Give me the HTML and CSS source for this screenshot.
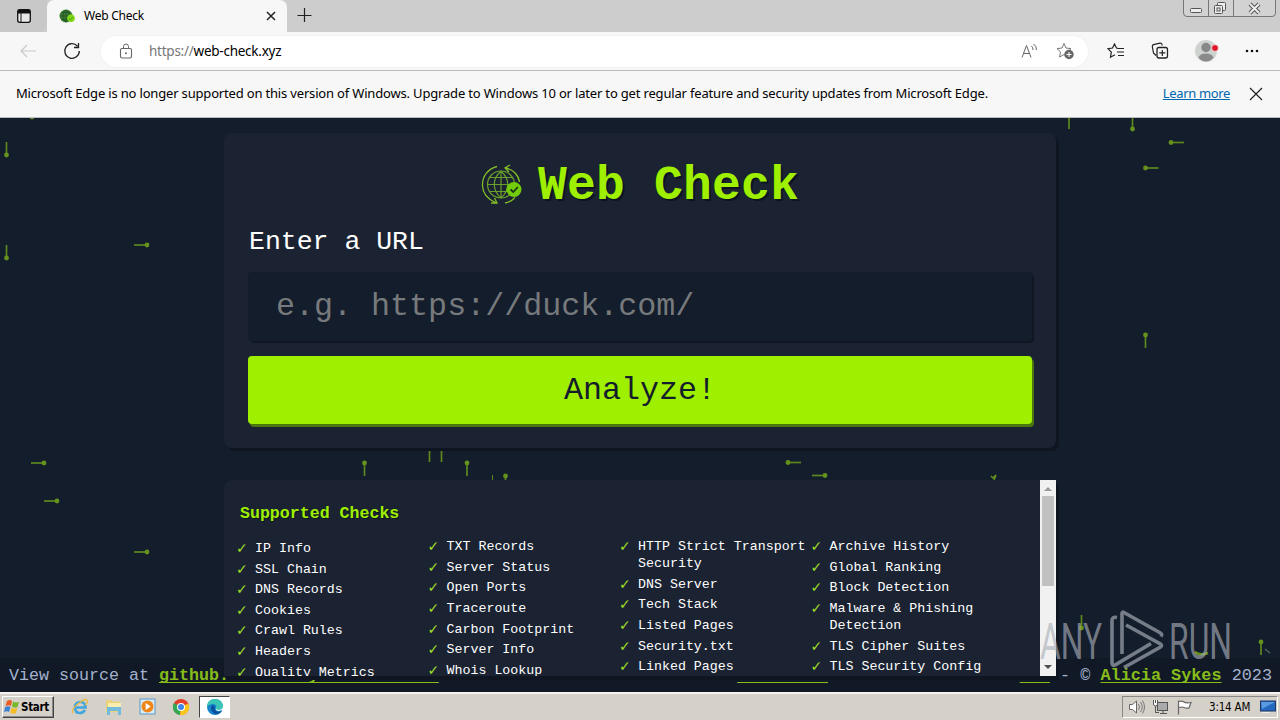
FILE: index.html
```html
<!DOCTYPE html>
<html lang="en">
<head>
<meta charset="utf-8">
<title>Web Check</title>
<link rel="stylesheet" href="styles.css">
</head>
<body>
<div class="screen">
  <header class="tabs">
    <div class="tab-menu"><svg width="16" height="16" viewBox="0 0 16 16"><rect x="1.7" y="1.7" width="12.6" height="12.6" rx="2" fill="#e8e8e8" stroke="#111" stroke-width="1.3"/><path d="M2 2h12v3.5H2z" fill="#111"/><path d="M5 5v9" stroke="#111"/></svg></div>
    <div class="tab">
      <svg width="16" height="16" viewBox="0 0 16 16"><circle cx="7" cy="8" r="6.500" fill="#3c7a33"/><path d="M1 8h12M7 2v12M2.500 4.500h9M2.500 11.500h9M7 2C3 5 3 11 7 14M7 2c4 3 4 9 0 12" stroke="#235226" fill="none" stroke-width=".8"/><circle cx="12" cy="10.300" r="3.800" fill="#80d915"/><path d="M10 10.500l1.500 1.300 2.500-3" stroke="#4c9a12" fill="none"/></svg>
      <span class="tab-title">Web Check</span>
      <svg class="tab-x" width="10" height="10" viewBox="0 0 10 10"><path d="M1 1l8 8M9 1l-8 8" stroke="#222" stroke-width="1.500"/></svg>
    </div>
    <svg class="plus" width="16" height="16" viewBox="0 0 16 16"><path d="M7.500 1v14M.5 8.500h14" stroke="#222" stroke-width="1.200"/></svg>
    <svg class="winctl" width="94" height="18" viewBox="0 0 94 18"><path d="M.5 0v13q0 3.500 3.500 3.500h85q3.500 0 3.500-3.500V0M25.500 0v16M50.500 0v16" fill="#d2d2d2" stroke="#777"/><g fill="#eee" stroke="#555"><rect x="7.500" y="8.500" width="11" height="4" rx="1"/><rect x="34.500" y="2.500" width="8" height="8" rx="1"/><rect x="31.500" y="5.500" width="8" height="8" rx="1"/><rect x="34" y="8" width="3" height="3"/></g><path d="M67 4l9 9M76 4l-9 9" stroke="#555" stroke-width="4"/><path d="M67 4l9 9M76 4l-9 9" stroke="#eee" stroke-width="2"/></svg>
  </header>

  <div class="toolbar">
    <svg width="18" height="16" viewBox="0 0 18 16"><path d="M17 8H2M8 2L2 8l6 6" stroke="#c9c9c9" fill="none" stroke-width="1.200"/></svg>
    <svg class="reload" width="18" height="18" viewBox="0 0 18 18"><path d="M16.300 9A7.300 7.300 0 1 1 14.500 4.200M15.500 1v4.500H11" stroke="#222" fill="none" stroke-width="1.300"/></svg>
    <div class="address">
      <svg width="14" height="16" viewBox="0 0 14 16"><rect x="1.500" y="5.500" width="11" height="9.500" rx="1.500" fill="none" stroke="#666" stroke-width="1.100"/><path d="M4.500 5.500V3.500a2.500 2.500 0 0 1 5 0v2" stroke="#666" fill="none"/><circle cx="7" cy="10.300" r="1" fill="#666"/></svg>
      <div class="url"><span>https://</span>web-check.xyz</div>
      <svg class="aloud" width="17" height="17" viewBox="0 0 17 17"><path d="M2 14.500L6.500 2.500l4.500 12M3.700 10.500h5.700M11.500 3q1.500 1.500 1.500 4M13.500 1q3 2 3 6" stroke="#666" fill="none"/></svg>
      <svg class="favadd" width="18" height="18" viewBox="0 0 18 18"><path d="M8 1.500l2 4.500 5 .6-3.700 3.400.9 5L8 12.500 3.600 15l.9-5L1 6.600 6 6z" fill="#fff" stroke="#777"/><circle cx="13" cy="12.500" r="4.700" fill="#666"/><path d="M13 10v5M10.500 12.500h5" stroke="#fff"/></svg>
    </div>
    <svg class="t-fav" width="18" height="18" viewBox="0 0 18 18"><path d="M11 6.300L9.500 6 7.500 2 5.500 6 1 6.700l3.300 3.500-.8 5L8 12.800M11 6.500h6M10 10h7M11 13.500h6" stroke="#222" fill="none" stroke-width="1.200"/></svg>
    <svg class="t-col" width="18" height="18" viewBox="0 0 18 18"><path d="M5 13.500L2.500 11 1.300 4.500Q1.200 3 2.500 2.700L9 1.200q1.700-.2 2 1.300l.2 1" stroke="#222" fill="none" stroke-width="1.200"/><rect x="6" y="5.500" width="10.500" height="10.500" rx="2" fill="none" stroke="#222" stroke-width="1.300"/><path d="M11.300 8v6M8.300 10.800h6" stroke="#222" stroke-width="1.200"/></svg>
    <svg class="t-user" width="24" height="24" viewBox="0 0 24 24"><circle cx="11" cy="12" r="11" fill="#cfd3cf"/><circle cx="11" cy="8.500" r="4.700" fill="#888"/><path d="M3.500 18.500Q5 14.500 11 14.500t7.500 4q-3 4-7.500 4t-7.500-4z" fill="#8a8a8a"/><circle cx="20" cy="9" r="3.300" fill="#e01624" stroke="#f3dada" stroke-width=".7"/></svg>
    <svg class="t-dots" width="14" height="4" viewBox="0 0 14 4"><g fill="#111"><circle cx="2" cy="2" r="1.300"/><circle cx="7" cy="2" r="1.300"/><circle cx="12" cy="2" r="1.300"/></g></svg>
  </div>

  <div class="notice">
    <span class="notice-text">Microsoft Edge is no longer supported on this version of Windows. Upgrade to Windows 10 or later to get regular feature and security updates from Microsoft Edge.</span>
    <span class="learn">Learn more</span>
    <svg width="14" height="14" viewBox="0 0 14 14"><path d="M1 1l12 12M13 1L1 13" stroke="#222" stroke-width="1.200"/></svg>
  </div>

  <main class="page">
    <svg class="pins" width="1280" height="574" viewBox="0 118 1280 574">
      <defs><g id="pin"><path d="M0 0v13" stroke="#5d881e" stroke-width="1.700"/><circle r="2.400" fill="#64921c"/></g></defs>
      <use href="#pin" transform="translate(6.500 155) rotate(180)"/><use href="#pin" transform="translate(6.500 258) rotate(180)"/>
      <use href="#pin" transform="translate(147 245) rotate(90)"/><use href="#pin" transform="translate(32 117) rotate(180)"/>
      <use href="#pin" transform="translate(1069 116)"/><use href="#pin" transform="translate(1132.500 129) rotate(180)"/>
      <use href="#pin" transform="translate(1171 142.500) rotate(-90)"/><use href="#pin" transform="translate(1145.500 168) rotate(-90)"/>
      <use href="#pin" transform="translate(1145.500 335)"/><use href="#pin" transform="translate(44 463) rotate(90)"/>
      <use href="#pin" transform="translate(57 501) rotate(90)"/><use href="#pin" transform="translate(147 552) rotate(90)"/>
      <use href="#pin" transform="translate(364.500 463)"/><use href="#pin" transform="translate(429.500 449)"/><use href="#pin" transform="translate(441.500 449)"/>
      <use href="#pin" transform="translate(467 463)"/><use href="#pin" transform="translate(505.500 476)"/><path d="M492.500 475v5" stroke="#5d881e"/>
      <use href="#pin" transform="translate(788 462.500) rotate(-90)"/><use href="#pin" transform="translate(825 475.500) rotate(90)"/>
      <path d="M991 476l2 2 3-3-2 5" fill="none" stroke="#64921c" stroke-width="1.500"/>
      <use href="#pin" transform="translate(1081.500 628) rotate(180)"/><use href="#pin" transform="translate(1261 642)"/><path d="M1265 649l5 4" stroke="#53645a" stroke-width="1.500"/>
      <path d="M1195 652q5 4 13 1" stroke="#64921c" stroke-width="2.500" fill="none"/>
    </svg>
    <footer class="foot"><span>View source at <a>github.com/Lissy93/web-check</a></span><span class="credit"><a>Web-Check</a> is licensed under <a>MIT</a> - © <a>Alicia Sykes</a> 2023</span></footer>
    <section class="card form">
      <h1><svg width="42" height="42" viewBox="0 0 42 42"><g fill="none" stroke="#83bd27" stroke-width="1.300"><path d="M16 2.500C7 5 1 12 1.500 22c.4 8 5 13 13 16.500M10 39l6 0-2.500-5M24 4c8 1 13.500 7 14.500 14M29 1l-5 3 4 4M24 39q6-1 10-5.500"/><g stroke="#6a9f2c" stroke-width="1.200"><circle cx="20" cy="20.500" r="13.500"/><path d="M20 7v27M6.500 20.500h27M9 13.500h22M9 27.500h22M20 7c-9 8-9 19 0 27M20 7c9 8 9 19 0 27"/></g></g><circle cx="33" cy="25.500" r="7.500" fill="#72cc08"/><path d="M29.500 25.500l2.800 2.500 4.500-5" stroke="#193519" stroke-width="1.800" fill="none"/></svg><span>Web Check</span></h1>
      <label>Enter a URL</label>
      <div class="field">e.g. https://duck.com/</div>
      <div class="analyze">Analyze!</div>
    </section>
    <section class="card checks">
      <div class="checks-body">
        <h2>Supported Checks</h2>
        <div class="cols">
          <ul class="first"><li>IP Info</li><li>SSL Chain</li><li>DNS Records</li><li>Cookies</li><li>Crawl Rules</li><li>Headers</li><li>Quality Metrics</li></ul>
          <ul><li>TXT Records</li><li>Server Status</li><li>Open Ports</li><li>Traceroute</li><li>Carbon Footprint</li><li>Server Info</li><li>Whois Lookup</li></ul>
          <ul><li>HTTP Strict Transport<br>Security</li><li>DNS Server</li><li>Tech Stack</li><li>Listed Pages</li><li>Security.txt</li><li>Linked Pages</li></ul>
          <ul><li>Archive History</li><li>Global Ranking</li><li>Block Detection</li><li>Malware &amp; Phishing<br>Detection</li><li>TLS Cipher Suites</li><li>TLS Security Config</li></ul>
        </div>
      </div>
      <div class="scroll"><svg width="16" height="16" viewBox="0 0 16 16"><path d="M4 11l4-4 4 4z" fill="#999"/></svg><div class="thumb"></div><svg class="down" width="16" height="16" viewBox="0 0 16 16"><path d="M4 5l4 4 4-4z" fill="#505050"/></svg></div>
    </section>
    <svg class="mark" width="200" height="70" viewBox="1035 605 200 70">
      <g fill="#a9afb8" fill-opacity=".65" font-family="Roboto" font-size="50">
        <text x="1040" y="659" textLength="62" lengthAdjust="spacingAndGlyphs">ANY</text>
        <text x="1169" y="659" textLength="63" lengthAdjust="spacingAndGlyphs">RUN</text>
      </g>
      <path d="M1117 617.500q-5-1-5 3V663q0 3 3 2l36-21.500M1122 654V613.500q0-2 2-1l36.500 20.500q2 1 .5 3.500M1126 625l34.500 19q2 1.500 0 3L1124 667.500" fill="none" stroke="#818894" stroke-opacity=".9" stroke-width="3.600"/>
    </svg>
  </main>

  <div class="taskbar">
    <div class="start"><svg width="16" height="16" viewBox="0 0 16 16"><path d="M3 2q3-2 5 0L7 7Q5 5.500 1.500 7z" fill="#e85b24"/><path d="M9 2.500q3 2 6 0L13.500 8q-3 1.500-5.500-.5z" fill="#77b82a"/><path d="M1.200 8q3-1.500 5.300 0L5 13q-2-1.500-5 0z" fill="#3b83d2"/><path d="M7.700 8.500q3 2 5.500.5L12 14q-3 1.500-5.800-.5z" fill="#f4bd25"/></svg>Start</div>
    <svg class="app ie" width="18" height="18" viewBox="0 0 18 18"><path d="M14 12q-2 3-5 3-5 0-5-5.500T9.500 4Q14 4 14.500 9.500H5" fill="none" stroke="#42a7df" stroke-width="2.700"/><path d="M2 15Q0 11 8 5t8-2q1 2-2 4" fill="none" stroke="#e9b93c" stroke-width="1.300"/></svg>
    <svg class="app fold" width="18" height="18" viewBox="0 0 18 18"><path d="M1 2h5l1 1.500h8V14H1z" fill="#ecd27b"/><path d="M3 5h13v4H3z" fill="#f7edaf"/><path d="M2 9h14v8h-3v-4H5v4H2z" fill="#72bbde"/></svg>
    <svg class="app media" width="18" height="18" viewBox="0 0 18 18"><rect x="1" y="1" width="15" height="15" fill="#d9ebf7" stroke="#5b99c8"/><circle cx="8.500" cy="8.500" r="6" fill="#ef8616"/><path d="M6.700 5l5 3.500-5 3.500z" fill="#fff"/></svg>
    <svg class="app chrome" width="18" height="18" viewBox="0 0 18 18"><circle cx="9" cy="9" r="8" fill="#e43e2b"/><path d="M9 9L2 5a8 8 0 0 0 6 12z" fill="#35a853"/><path d="M9 9l7.200-3.500A8 8 0 0 1 8 17z" fill="#f8c91c"/><circle cx="9" cy="9" r="4" fill="#fff"/><circle cx="9" cy="9" r="3" fill="#4285e8"/></svg>
    <div class="active"><svg width="18" height="18" viewBox="0 0 18 18"><circle cx="9" cy="9" r="8" fill="#1684ca"/><path d="M1 8Q2 1 9 1t8 7q0 4-5 4-3 0-2-2 1-4-3-4-4 0-6 3z" fill="#3bc5b5"/><path d="M6 7q-3 6 3 9 4 1 7-3-5 2-7-1-1-1 0-3-1-2-3-2z" fill="#0b519f"/><path d="M10 10q-1 3 3 3l4-1.200V9q-1 3-5 3-2 0-2-2z" fill="#fff"/></svg></div>
    <div class="tray">
      <svg width="18" height="16" viewBox="0 0 18 16"><path d="M1.500 5.500h3L8.500 2v12l-4-3.500h-3z" fill="#fff" stroke="#666"/><path d="M10.500 5q2 3 0 6M12.500 3q3.500 5 0 10M14.500 1.500q4 6.500 0 13" fill="none" stroke="#777"/></svg>
      <svg width="18" height="16" viewBox="0 0 18 16"><rect x="5.500" y="3.500" width="10" height="8" fill="#aaa" stroke="#555"/><path d="M8 14.500h7M11 12v2M3.500 7v6.500H7" stroke="#555" fill="none"/><path d="M1.500 1v4q0 2 2 2t2-2V1M3.500 1v3" fill="#fff" stroke="#555"/></svg>
      <svg width="18" height="16" viewBox="0 0 18 16"><path d="M2.500 1.500v14M3 2.500q3-1 5 .5 2 1.500 7 .5l-2 5.500q-3 .5-5-.5t-5 0" fill="#fff" stroke="#666" stroke-width="1.200"/></svg>
      <span class="clock">3:14 AM</span>
      <svg width="16" height="14" viewBox="0 0 16 14"><rect x=".5" y="1" width="15" height="10" fill="#2469bd" stroke="#1a3768"/><path d="M1 2h14L2 9z" fill="#5a9ae2"/><path d="M2 12.500h8" stroke="#eee"/></svg>
    </div>
  </div>
</div>
</body>
</html>
```
FILE: styles.css
```css
* { box-sizing: border-box; }
body { margin: 0; font-family: "Noto Sans", sans-serif; font-size: 13px; color: #000; }
svg { display: block; flex: none; }
.screen { width: 1280px; height: 720px; display: flex; flex-direction: column; overflow: hidden; }
.tabs { height: 32px; background: #cdcdcd; display: flex; flex: none; }
.tab-menu { width: 47px; padding: 8px 0 0 16px; background: #c8c8c8; border-radius: 0 0 8px 0; }
.tab { width: 240px; background: #f7f7f7; border-radius: 7px 7px 0 0; display: flex; align-items: center; padding: 0 11px 0 12px; }
.tab-title { margin-left: 9px; font-size: 12px; line-height: 16px; padding-bottom: 1px; flex: 1; letter-spacing: -.25px; }
.plus { margin: 7px 0 0 10px; }
.winctl { margin-left: auto; margin-right: 3px; }
.toolbar { height: 39px; flex: none; background: #f7f7f7; border-bottom: 1px solid #bbb; display: flex; align-items: center; padding-left: 19px; }
.reload { margin-left: 26px; }
.address { width: 987px; height: 31px; margin-left: 20px; background: #fff; border-radius: 16px; display: flex; align-items: center; padding: 0 14px 0 18px; box-shadow: 0 0 0 1px #f2f2f2; }
.url { margin-left: 16px; flex: 1; font-size: 13.500px; letter-spacing: -.25px; }
.url span { color: #777; }
.favadd { margin-left: 19px; }
.t-fav { margin-left: 19px; }
.t-col { margin-left: 26px; }
.t-user { margin-left: 26px; }
.t-dots { margin-left: 26px; }
.notice { height: 47px; flex: none; background: #f7f7f7; border-bottom: 1px solid #b9bcc0; display: flex; align-items: center; padding: 0 17px 0 16px; white-space: nowrap; }
.notice-text { flex: 1; letter-spacing: -.175px; padding-bottom: 2px; }
.learn { color: #0067b0; text-decoration: underline; margin-right: 19px; letter-spacing: -.35px; padding-bottom: 2px; }
.page { position: relative; height: 574px; flex: none; background: #141d2b; padding: 15px 224px 0; overflow: hidden; font-family: "Liberation Mono", monospace; }
.pins { position: absolute; left: 0; top: 0; }
.card { position: relative; background: #1b2332; border-radius: 8px; box-shadow: 3px 3px 0 #101621; }
.form { height: 315px; padding: 24px; }
h1 { margin: 0; height: 56px; display: flex; align-items: center; justify-content: center; gap: 15px; font-size: 48px; color: #9fef00; letter-spacing: .2px; text-shadow: 2px 2px 0 #0d1420; }
h1 span { padding-top: 2px; }
label { display: block; height: 59px; padding: 14px 0 0 1px; font-size: 26.500px; line-height: 31px; color: #fff; }
.field { height: 69px; border-radius: 4px; background: #141d2b; box-shadow: 2px 2px 0 #111722; padding-left: 28px; font-size: 31.700px; line-height: 70px; color: #777a7c; }
.analyze { height: 68px; margin-top: 15px; border-radius: 4px; background: #9fef00; box-shadow: 2px 3px 0 #4b760f; text-align: center; font-size: 31.700px; line-height: 70px; color: #141d2b; }
.checks { margin-top: 32px; height: 196px; overflow: hidden; display: flex; border-radius: 8px 0 0 0; box-shadow: 3px 4px 0 #101621; }
.checks-body { flex: 1; padding: 22px 12px 0 13px; }
h2 { margin: 0 0 0 3px; padding-top: 1px; font-size: 16.600px; line-height: 22px; color: #9fef00; text-shadow: 1px 1px 0 #0d1420; }
.cols { display: grid; grid-template-columns: repeat(4, 191.500px); margin-top: 11px; }
ul { list-style: none; margin: 0; padding: .4px 0 0; color: #fff; font-size: 13.300px; line-height: 17px; white-space: nowrap; }
.first { padding-top: 2.300px; }
li { position: relative; padding: 1.800px 0 1.800px 18px; }
li::before { content: "✓"; position: absolute; left: -1px; color: #9fdc28; font-family: "DejaVu Sans", sans-serif; font-size: 14px; }
.scroll { width: 16px; background: #f1f1f1; display: flex; flex-direction: column; }
.thumb { height: 90px; margin: 0 2px; background: #c1c1c1; }
.down { margin-top: auto; }
.foot { position: absolute; left: 0; right: 0; bottom: 0; height: 34px; padding: 0 8px 0 9px; background: #101925; display: flex; justify-content: space-between; align-items: center; font-size: 16.670px; color: #a4b1cd; white-space: pre; }
.foot a { color: #87bd1a; font-weight: bold; text-decoration: underline; text-decoration-thickness: 1px; text-underline-offset: 2px; text-decoration-skip-ink: none; }
.credit { font-size: 16.820px; }
.mark { position: absolute; left: 1035px; top: 487px; }
.taskbar { height: 28px; flex: none; background: #d5d0c8; border-top: 2px solid #f4f3f0; display: flex; align-items: center; font-family: "DejaVu Sans Condensed", "DejaVu Sans", sans-serif; }
.start { width: 52px; height: 22px; margin-left: 2px; display: flex; align-items: center; gap: 1px; font-weight: bold; font-size: 11.500px; letter-spacing: -.3px; border: 1px solid; border-color: #fff #444 #444 #fff; padding-left: 1px; box-shadow: inset -1px -1px #888; }
.ie { margin-left: 17px; }
.fold { margin-left: 16px; }
.media { margin-left: 16px; }
.chrome { margin-left: 15px; }
.active { width: 31px; height: 22px; margin-left: 9px; background: #fff; border: 1px solid; border-color: #444 #fff #fff #444; display: flex; align-items: center; justify-content: center; }
.tray { margin-left: auto; margin-right: 2px; width: 156px; height: 22px; border: 1px solid; border-color: #888 #fff #fff #888; display: flex; align-items: center; gap: 6px; padding-left: 5px; }
.clock { font-size: 11.500px; letter-spacing: -.2px; white-space: nowrap; margin: 0 4px 0 9px; }
```
